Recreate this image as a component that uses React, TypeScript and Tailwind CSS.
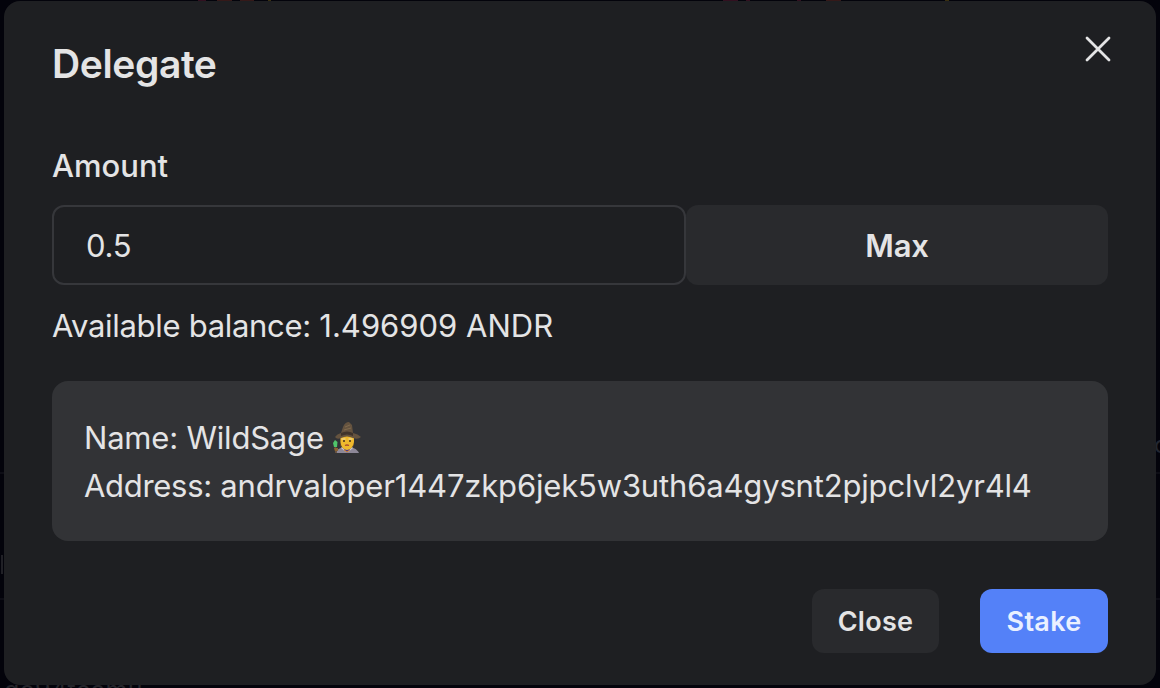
function Mage() {
  return (
    <svg viewBox="0 0 28 32" className="h-8 w-7" role="img" aria-label="Mage">
      <path d="M3 31C4 27 8 25 14 25S24 27 26 31Z" fill="#8d8898" />
      <path d="M8 26L14 31L20 26L18 24H10Z" fill="#c9c6d0" />
      <path d="M10 26L14 31L18 26Z" fill="#503b87" />
      <path d="M7 14H21V24Q14 30 7 24Z" fill="#55402f" />
      <path d="M7.500 14H21V20Q20 27 14 28Q8 27 7.500 20Z" fill="#efb92d" />
      <path d="M8.500 17H12.500M15.500 17H19.500" stroke="#eee2b0" strokeWidth="1.2" />
      <circle cx="11" cy="19" r="1" fill="#47311f" />
      <circle cx="17" cy="19" r="1" fill="#47311f" />
      <path d="M12 23.500Q14 22.500 16 23.500" fill="none" stroke="#a8492d" strokeWidth="1.3" />
      <path d="M11 28L14 30L17 28" fill="none" stroke="#d1862c" strokeWidth="1" />
      <path d="M2 15Q4 12 8 11L10 5Q12 0 16 0L19 3L20 11Q25 12 28 15Q25 18 20 16Q14 13 8 16Q4 18 2 15Z" fill="#65533f" />
      <path d="M8 11Q14 8 20 11V14Q14 11 8 14Z" fill="#40342b" />
      <path d="M12 5L17 3M11 8L18 6" stroke="#806b4e" strokeWidth="1" />
      <path d="M2 22L3 31" stroke="#68513c" strokeWidth="1.8" />
      <path d="M0 21L2 18L4.500 20L4 25H1Z" fill="#4fc46a" />
      <path d="M1 26H5V29H2Z" fill="#8a6332" />
    </svg>
  );
}

function CloseIcon() {
  return (
    <svg viewBox="0 0 28 28" className="h-7 w-7" fill="none" stroke="#e4e4e5" strokeWidth="2.8" strokeLinecap="round">
      <path d="M3 3L25 25M25 3L3 25" />
    </svg>
  );
}

function BackdropTop() {
  return (
    <svg viewBox="0 0 1160 1" className="block h-px w-full shrink-0" aria-hidden="true">
      <path d="M198 0h8v1h-8zM723 0h15v1h-15zM746 0h4v1h-4zM797 0h4v1h-4z" fill="#321020" />
      <path d="M217 0h15v1h-15zM240 0h14v1h-14zM826 0h15v1h-15z" fill="#351919" />
      <path d="M268 0h3v1h-3zM945 0h4v1h-4z" fill="#3a3010" />
    </svg>
  );
}

export default function App() {
  return (
    <div className="flex h-[688px] w-[1160px] flex-col overflow-hidden bg-[#03030b] font-['Inter',sans-serif] text-[#e4e4e5]">
      <BackdropTop />
      <div className="flex h-[684px]">
        <svg viewBox="0 0 4 684" className="h-full w-1 shrink-0" aria-hidden="true">
          <path d="M0 471h4v2H0zM0 597h4v2H0z" fill="#0d0d15" />
          <path d="M1 554h2v19H1z" fill="#202026" />
        </svg>
        <main className="flex w-[1152px] flex-col rounded-[16px] bg-[#1e1f22] px-12 pb-8">
          <header className="flex items-start justify-between pt-[33px]">
            <h2 className="pt-[5px] text-[39px] leading-[50px] font-semibold tracking-[-0.4px]">Delegate</h2>
            <button aria-label="Dismiss" className="-mr-1 pt-px"><CloseIcon /></button>
          </header>
          <label className="pt-[53px] text-[31px] leading-[48px] font-medium">Amount</label>
          <div className="mt-[15px] flex h-20">
            <div className="flex w-[634px] items-center rounded-[12px] border-2 border-[#36373b] px-8 pt-0.5 text-[31px] tracking-[-0.2px]">0.5</div>
            <button className="flex-1 rounded-[12px] bg-[#292a2d] pt-0.5 text-[31px] font-semibold tracking-[-0.2px]">Max</button>
          </div>
          <p className="mt-[17px] text-[31px] leading-[48px] tracking-[-0.18px]"><span className="tracking-[-0.3px]">Available balance: </span><span className="tracking-[0px]">1.496909 ANDR</span></p>
          <section className="mt-[31px] h-40 rounded-[16px] bg-[#323336] px-8 pt-[33px] text-[31px] leading-[48px] tracking-[-0.2px]">
            <p className="flex items-center gap-[9px]">Name: WildSage <Mage /></p>
            <p><span className="tracking-[-0.3px]">Address: </span><span className="tracking-[-0.17px]">andrvaloper1447zkp6jek5w3uth6a4gysnt2pjpclvl2yr4l4</span></p>
          </section>
          <footer className="mt-12 flex justify-end gap-[41px] text-[27px] font-semibold tracking-[0.3px]">
            <button className="h-16 w-[127px] rounded-[12px] bg-[#292a2d] pt-[2px]">Close</button>
            <button className="h-16 w-32 rounded-[12px] bg-[#5481f8] pt-[2px] text-[#eaf0ff]">Stake</button>
          </footer>
        </main>
        <div className="flex w-1 flex-col overflow-hidden pt-[430px] text-[24px] leading-7 text-[#222630]">
          <span className="-ml-0.5">o</span>
          <svg viewBox="0 0 4 226" className="h-[226px] w-1 shrink-0" aria-hidden="true">
            <path d="M0 13h4v2H0zM0 139h4v2H0z" fill="#0d0d15" />
          </svg>
        </div>
      </div>
      <div className="h-[3px] overflow-hidden pl-1 text-[25px] leading-7 text-[#25252b]">
        <p className="-mt-[9px] tracking-[0.4px]">do94teamu</p>
      </div>
    </div>
  );
}
